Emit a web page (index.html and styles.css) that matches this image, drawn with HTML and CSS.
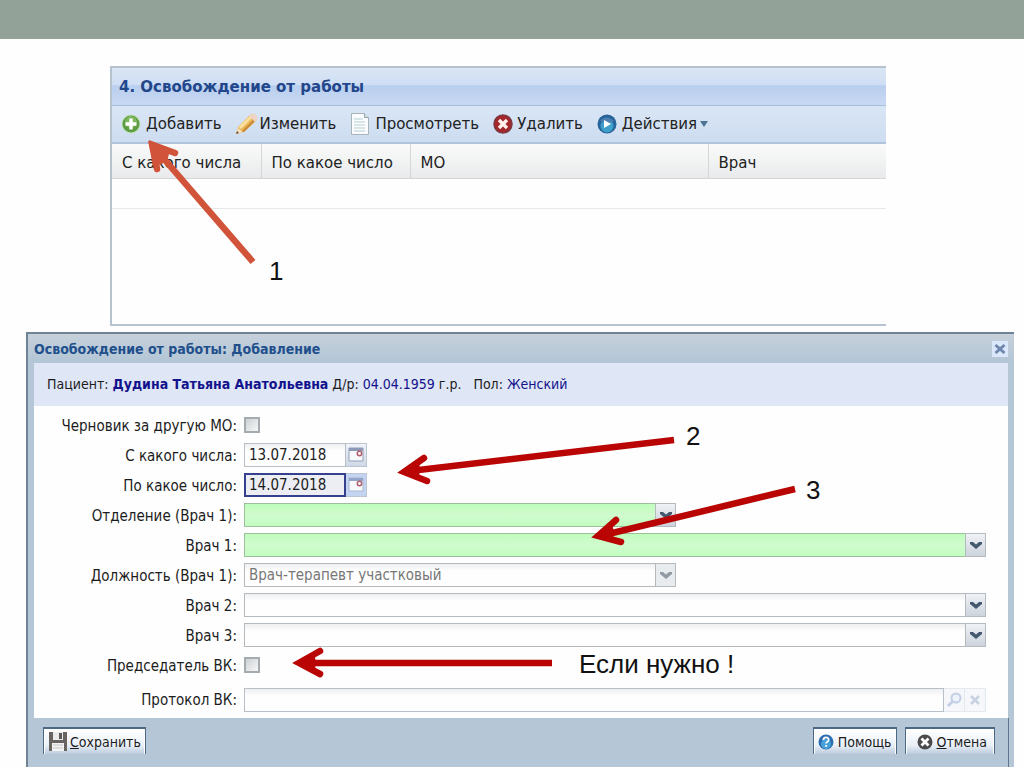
FILE: index.html
```
<!DOCTYPE html>
<html lang="ru">
<head>
<meta charset="utf-8">
<title>Освобождение от работы</title>
<link rel="stylesheet" href="styles.css">
</head>
<body>
<div class="slide">
  <div class="slide-band"></div>

  <section class="panel">
    <h2 class="panel-title">4. Освобождение от работы</h2>
    <div class="toolbar">
      <button class="tool" type="button">
        <svg width="20" height="20" viewBox="0 0 20 20"><circle cx="10" cy="10" r="9.5" fill="#c4e3bb"/><circle cx="10" cy="10" r="8.5" fill="#5c9c43"/><circle cx="10" cy="8" r="6" fill="#7eb75f"/><path d="M8.300 4.500h3.400v3.800h3.800v3.400h-3.800v3.800H8.300v-3.800H4.500V8.300h3.800z" fill="#fff"/></svg>
        Добавить</button>
      <button class="tool tool-edit" type="button">
        <svg width="24" height="24" viewBox="0 0 24 24"><path d="M2 22l2-7L16 3q2-2 5 0t1 6L10 20z" fill="#e9b556"/><path d="M4.500 15L17 3l3 1L7 17z" fill="#fbe0a0"/><path d="M7 20L20 7l2 1-12 12z" fill="#c98a36"/><path d="M16 3q3-3 6 0t0 6l-1 1-6-6z" fill="#efd3c4"/><path d="M2 22l2-6 5 4z" fill="#f5dfba"/><path d="M2 22l1-3 2 2z" fill="#6b5030"/></svg>
        Изменить</button>
      <button class="tool tool-view" type="button">
        <svg width="20" height="24" viewBox="0 0 20 24"><path d="M1.500 1.500h13l4 4v17h-17z" fill="#fafcff" stroke="#a9b3b8"/><path d="M14.500 1.500v4h4" fill="#d9e4e8" stroke="#8fa6ad"/><path d="M4 7h9M4 10h11M4 13h11M4 16h11M4 19h11" stroke="#b6cfce"/></svg>
        Просмотреть</button>
      <button class="tool tool-delete" type="button">
        <svg width="20" height="20" viewBox="0 0 20 20"><circle cx="10" cy="10" r="9" fill="#a5262a"/><circle cx="10" cy="10" r="9" fill="none" stroke="#7c3a42" stroke-width="1.500"/><path d="M6 6l8 8M14 6l-8 8" stroke="#fff0ee" stroke-width="3.400"/></svg>
        Удалить</button>
      <button class="tool tool-actions" type="button">
        <svg width="20" height="20" viewBox="0 0 20 20"><circle cx="10" cy="10" r="9.500" fill="#27649b"/><circle cx="10" cy="12" r="6.500" fill="#3d9fca"/><path d="M3 7q6-7 14 0-6 3-14 0z" fill="#4c80b0"/><path d="M7 6l7 4-7 4z" fill="#fff"/></svg>
        Действия
        <svg class="caret" width="8" height="6" viewBox="0 0 8 6"><path d="M0 0h8L4 6z" fill="#4d7394"/></svg></button>
    </div>
    <table class="grid">
      <thead><tr><th class="col-date">С какого числа</th><th class="col-date">По какое число</th><th class="col-org">МО</th><th>Врач</th></tr></thead>
      <tbody><tr><td></td><td></td><td></td><td></td></tr></tbody>
    </table>
  </section>

  <section class="window">
    <header class="window-head">
      <h2 class="window-title">Освобождение от работы: Добавление</h2>
      <button class="close" type="button" aria-label="Закрыть"><svg width="12" height="12" viewBox="0 0 12 12"><path d="M1.500 2l9 8M10.500 2l-9 8" stroke="#6d87ad" stroke-width="3"/></svg></button>
    </header>
    <div class="window-body">
      <p class="patient">Пациент: <b>Дудина Татьяна Анатольевна</b> Д/р: <span>04.04.1959</span> г.р. <span class="sex">Пол: <span>Женский</span></span></p>
      <form class="form" id="release">
        <label for="draft">Черновик за другую МО:</label>
        <div><input class="check" type="checkbox" id="draft"></div>

        <label for="from">С какого числа:</label>
        <div class="field date">
          <input class="text" id="from" type="text" value="13.07.2018">
          <button class="trigger" type="button" aria-label="Календарь"><svg width="16" height="16" viewBox="0 0 16 16"><path d="M1 1h14v13H1z" fill="#f7f9fd" stroke="#929fbb"/><path d="M1 1h14v3H1z" fill="#8d9ab8"/><circle cx="11.500" cy="6.500" r="2.200" fill="#fff" stroke="#b0606c" stroke-width="1.500"/></svg></button>
        </div>

        <label for="to">По какое число:</label>
        <div class="field date focused">
          <input class="text" id="to" type="text" value="14.07.2018">
          <button class="trigger" type="button" aria-label="Календарь"><svg width="16" height="16" viewBox="0 0 16 16"><path d="M1 1h14v13H1z" fill="#f7f9fd" stroke="#a9b6d4"/><path d="M1 1h14v3H1z" fill="#94a5cc"/><circle cx="11.500" cy="6.500" r="2.200" fill="#fff" stroke="#b0606c" stroke-width="1.500"/></svg></button>
        </div>

        <label for="dept">Отделение (Врач 1):</label>
        <div class="combo short required"><select id="dept"><option></option></select><span class="arrow"><svg width="12" height="8" viewBox="0 0 12 8"><path d="M0 1h3l3 2.500L9 1h3v2L6 8 0 3z"/></svg></span></div>

        <label for="doc1">Врач 1:</label>
        <div class="combo required"><select id="doc1"><option></option></select><span class="arrow"><svg width="12" height="8" viewBox="0 0 12 8"><path d="M0 1h3l3 2.500L9 1h3v2L6 8 0 3z"/></svg></span></div>

        <label for="post">Должность (Врач 1):</label>
        <div class="combo short off"><select id="post" disabled><option>Врач-терапевт участковый</option></select><span class="arrow"><svg width="12" height="8" viewBox="0 0 12 8"><path d="M0 1h3l3 2.500L9 1h3v2L6 8 0 3z"/></svg></span></div>

        <label for="doc2">Врач 2:</label>
        <div class="combo"><select id="doc2"><option></option></select><span class="arrow"><svg width="12" height="8" viewBox="0 0 12 8"><path d="M0 1h3l3 2.500L9 1h3v2L6 8 0 3z"/></svg></span></div>

        <label for="doc3">Врач 3:</label>
        <div class="combo"><select id="doc3"><option></option></select><span class="arrow"><svg width="12" height="8" viewBox="0 0 12 8"><path d="M0 1h3l3 2.500L9 1h3v2L6 8 0 3z"/></svg></span></div>

        <label for="chair">Председатель ВК:</label>
        <div><input class="check" type="checkbox" id="chair"></div>

        <label class="last" for="protocol">Протокол ВК:</label>
        <div class="field last">
          <input class="text" id="protocol" type="text">
          <button class="trigger faint" type="button" aria-label="Найти"><svg width="16" height="16" viewBox="0 0 16 16"><circle cx="10" cy="6" r="4.500" fill="#eef3fb" stroke="#c3cfe4" stroke-width="2"/><path d="M6.500 9.500L2 14" stroke="#c3cfe4" stroke-width="3"/></svg></button>
          <button class="trigger faint" type="button" aria-label="Очистить"><svg width="10" height="10" viewBox="0 0 10 10"><path d="M1 1l8 8M9 1L1 9" stroke="#c7d1e2" stroke-width="2.500"/></svg></button>
        </div>
      </form>
    </div>
    <footer class="window-foot">
      <button class="btn" type="submit" form="release">
        <svg width="20" height="19" viewBox="0 0 20 19"><path d="M1 0h18v19H1z" fill="#686460"/><path d="M5 0h10v8H5z" fill="#e9ecec"/><path d="M11 1h3v6h-3z" fill="#5d5954"/><path d="M4 11h12v8H4z" fill="#f3f3f3"/><path d="M5 13h10M5 16h10" stroke="#c6c6c6"/></svg>
        <span><u>С</u>охранить</span></button>
      <button class="btn btn-help" type="button">
        <svg width="16" height="16" viewBox="0 0 16 16"><circle cx="8" cy="8" r="7.500" fill="#2a6db0"/><circle cx="8" cy="10" r="5" fill="#47a0d8"/><path d="M5.300 6q.2-2.600 2.800-2.600T10.700 6Q10.600 7.200 9 8q-.9.500-.9 1.600" fill="none" stroke="#fff" stroke-width="1.800"/><path d="M7.200 11h1.800v1.800H7.200z" fill="#fff"/></svg>
        <span>Помощь</span></button>
      <button class="btn btn-cancel" type="button">
        <svg width="16" height="16" viewBox="0 0 16 16"><circle cx="8" cy="8" r="7.500" fill="#4b4b4d"/><path d="M4.500 4.500l7 7M11.500 4.500l-7 7" stroke="#fff" stroke-width="2.800"/></svg>
        <span><u>О</u>тмена</span></button>
    </footer>
  </section>

  <div class="notes">
    <svg class="arrows" width="1024" height="767" viewBox="0 0 1024 767">
      <g fill="none" stroke="#d0533a" stroke-width="6.500"><path d="M253 262L158 152"/><path d="M175 153L153 145 157 169" stroke-linecap="round"/></g>
      <path d="M148 141l22 8-2 9-6 6-9 2z" fill="#d0533a"/>
      <g fill="none" stroke="#b90504" stroke-width="6.500"><path d="M674 440L410 471"/><path d="M424 458L404 472 427 481" stroke-linecap="round"/><path d="M795 489L604 535"/><path d="M616 520L598 536 621 542" stroke-linecap="round"/><path d="M552 663H304"/><path d="M320 651L299 663 320 674" stroke-linecap="round"/></g>
      <path d="M399 472l19-13 2 9-1 9zM593 537l18-15 3 9-1 9zM293 663l21-11 2 11-2 11z" fill="#b90504"/>
    </svg>
    <span class="note note-1">1</span>
    <span class="note note-2">2</span>
    <span class="note note-3">3</span>
    <span class="note note-4">Если нужно !</span>
  </div>
</div>
</body>
</html>
```

FILE: styles.css
```
* { box-sizing: border-box; }
body { margin: 0; background: #fefefe; color: #1c1c1c; font: 15px/20px "DejaVu Sans Condensed", "DejaVu Sans", sans-serif; }
h2, p { margin: 0; }
button, input, select { font: inherit; color: inherit; margin: 0; border-radius: 0; }
button { padding: 0; border: 0; background: none; }
svg { display: block; flex: none; }

.slide { position: relative; display: flex; flex-direction: column; min-height: 100vh; }
.slide-band { height: 39px; background: #92a299; }

/* Список периодов */
.panel { margin: 27px 138px 0 110px; height: 260px; border: solid #b6c2cd; border-width: 2px 0 2px 2px; font-family: "DejaVu Sans", sans-serif; }
.panel-title { height: 38px; padding-left: 7px; border-bottom: 1px solid #a8bcdc; background: linear-gradient(#dae6f3, #cfdef5 45%, #b9cfef 48%, #c8d9f3); color: #22468a; font-size: 15px; line-height: 38px; }
.toolbar { display: flex; align-items: center; height: 38px; padding-left: 9px; border-bottom: 2px solid #b0c4dd; background: linear-gradient(#d9e6f6, #cddcf0); }
.tool { display: flex; align-items: center; gap: 5px; color: #222; }
.tool-edit { gap: 2px; margin-left: 12px; }
.tool-view { margin-left: 14px; }
.tool-delete { gap: 4px; margin-left: 14px; }
.tool-actions { margin-left: 14px; }
.caret { margin-left: -2px; }
.grid { width: 100%; border-collapse: collapse; table-layout: fixed; }
.grid th { height: 34px; padding: 4px 0 0 10px; border: solid #d4d6d8; border-width: 0 1px 1px 0; background: linear-gradient(#fafafa, #e9eaeb); color: #222; font-weight: 400; text-align: left; white-space: nowrap; }
.grid th:last-child { border-right: 0; }
.grid td { height: 30px; padding: 0; border-bottom: 1px solid #e6e8ea; }
.col-date { width: 149px; }
.col-org { width: 298px; }

/* Окно добавления */
.window { display: flex; flex: 1; flex-direction: column; margin: 6px 10px 0 26px; border: solid #6f8394; border-width: 2px 0 0 2px; background: #b5c6d7; }
.window-head { display: flex; align-items: center; justify-content: space-between; height: 29px; padding: 0 6px; background: linear-gradient(#c6d0db, #b2c6d6); }
.window-title { color: #214f8c; font-size: 14px; line-height: 20px; }
.close { display: grid; place-items: center; width: 16px; height: 16px; background: #dbe7fb; }
.window-body { margin: 0 6px; background: #fefefe; }
.patient { height: 43px; padding-left: 13px; background: #dfe6f6; font-size: 14px; line-height: 43px; white-space: nowrap; }
.patient b, .patient span span, .patient > span:not(.sex) { color: #12128c; }
.sex { margin-left: 8px; }
.form { display: grid; grid-template-columns: 203px 1fr; grid-auto-rows: 24px; gap: 6px 7px; padding: 7px 22px 11px 0; align-items: center; }
.form label { padding-top: 2px; text-align: right; white-space: nowrap; }
.last { margin-top: 10px; }
.form .last { height: 24px; }
.check { appearance: none; display: block; width: 16px; height: 16px; border: 2px solid #a5acb1; background: linear-gradient(135deg, #cdd2d4, #f7f7f7); }
.field { display: flex; height: 24px; }
.text { flex: 1; min-width: 0; padding: 0 4px; border: 1px solid #b9bfc6; background: linear-gradient(#eeeff1, #fefefe 7px); outline: 0; }
.date { width: 123px; }
.trigger { display: grid; place-items: center; width: 21px; border: 1px solid #bcc5d2; border-left: 0; background: linear-gradient(#f0f3f8, #cfd8e5); }
.focused .text { padding: 0 3px; border: 2px solid #35418f; background: #eceef4; }
.focused .trigger { background: #c3d4f0; }
.faint { border-color: #e4e8ef; background: #f6f7fa; }
.combo { display: grid; grid-template-columns: 1fr 21px; height: 24px; }
.combo select { grid-area: 1 / 1 / 2 / 3; appearance: none; width: 100%; padding: 0 25px 0 4px; border: 1px solid #b5babf; background: linear-gradient(#eeeff1, #fefefe 7px); }
.combo .arrow { grid-area: 1 / 2; display: grid; place-items: center; border: 1px solid #b5babf; background: linear-gradient(#f0f3f7, #ccd3dc); fill: #44596d; pointer-events: none; }
.short { width: 432px; }
.combo.required select { border-color: #9cc09c; background: linear-gradient(#bffdbc, #d0fbce 50%, #c2fdc0); }
.combo.off select { color: #777; opacity: 1; }
.combo.off .arrow { fill: #929ba3; background: #e9ecef; }
.window-foot { display: flex; flex: 1; align-items: flex-start; min-height: 47px; margin-right: 5px; padding: 9px 13px 8px 15px; border-right: 1px solid #60758a; }
.btn { display: flex; align-items: center; justify-content: center; gap: 2px; height: 27px; padding: 0 4px; border: 2px solid #4c6884; border-width: 2px 1px 0; background: linear-gradient(#fff, #eaf0f8 65%, #bccbdc); font-size: 14px; box-shadow: inset 1px 0 #fff, inset -1px 0 #fff; }
.btn-help { gap: 4px; margin-left: auto; }
.btn-cancel { gap: 4px; margin-left: 8px; padding: 0 7px 0 11px; }

/* Выноски */
.notes { position: absolute; top: 0; left: 0; z-index: 1; pointer-events: none; }
.note { position: absolute; color: #111; font: 26px/30px "Liberation Sans", Arial, sans-serif; white-space: nowrap; }
.note-1 { top: 256px; left: 269px; }
.note-2 { top: 421px; left: 686px; }
.note-3 { top: 475px; left: 806px; }
.note-4 { top: 649px; left: 579px; }
```
